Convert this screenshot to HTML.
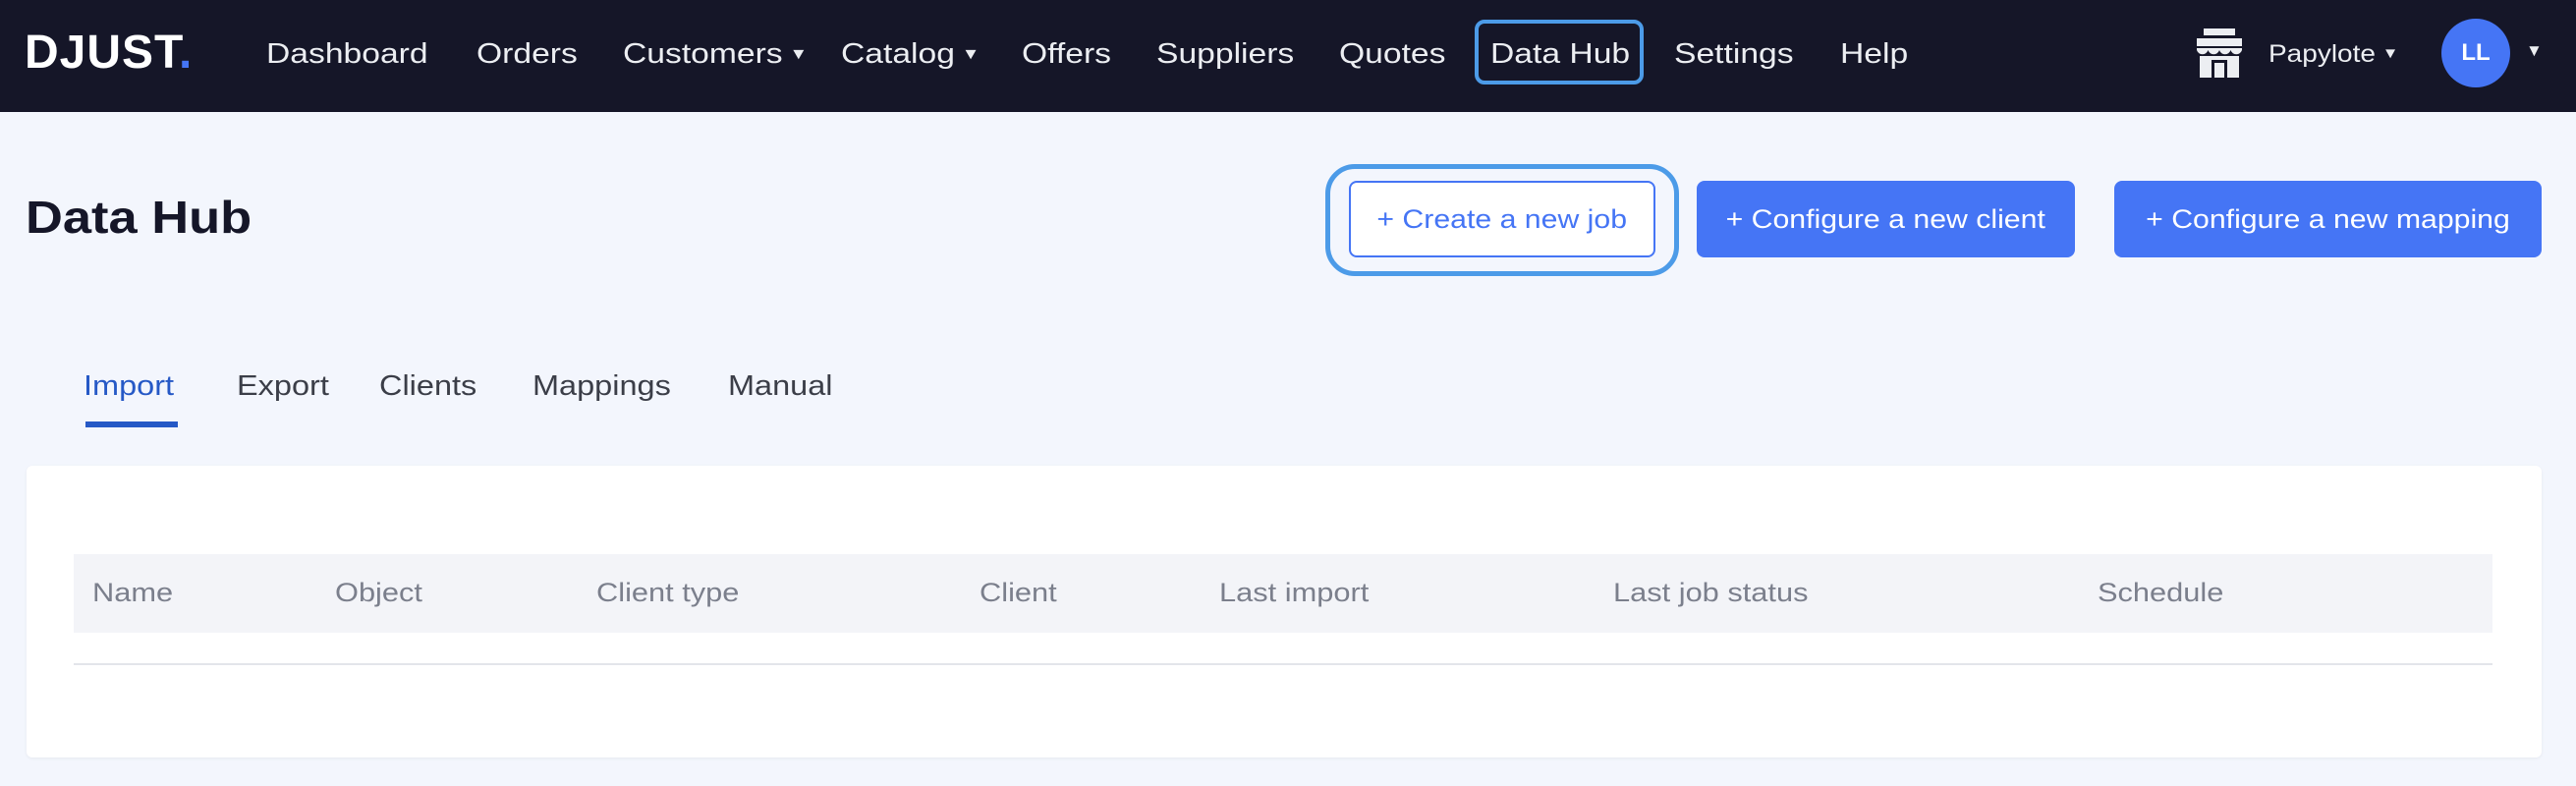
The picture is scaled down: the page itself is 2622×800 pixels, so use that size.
<!DOCTYPE html>
<html><head><meta charset="utf-8"><style>
*{margin:0;padding:0;box-sizing:border-box}
body{width:2622px;height:800px;background:#f3f6fd;font-family:"Liberation Sans",sans-serif;position:relative;overflow:hidden}
.a{position:absolute;white-space:nowrap}
.nav{position:absolute;left:0;top:0;width:2622px;height:114px;background:#151628}
.ni{position:absolute;top:38px;color:#eceef2;font-size:29px;line-height:34px;transform:scaleX(1.16);transform-origin:left center;white-space:nowrap}
.car{font-size:16px;vertical-align:4px;margin-left:6px}
.btn{position:absolute;top:184px;height:78px;border-radius:8px;font-size:27px;display:flex;align-items:center;justify-content:center}
.btn span{display:inline-block;transform:scaleX(1.12);white-space:nowrap}
.th{position:absolute;top:588px;color:#7b7f8c;font-size:27px;line-height:30px;transform:scaleX(1.14);transform-origin:left center;white-space:nowrap}
.tab{position:absolute;top:376px;color:#3b3e48;font-size:29px;line-height:34px;transform:scaleX(1.12);transform-origin:left center;white-space:nowrap}
</style></head><body>
<div class="nav">
<div class="a" style="left:25px;top:26px;color:#fff;font-size:48px;font-weight:bold;line-height:56px;letter-spacing:1px">DJUST<span style="color:#4575f5">.</span></div>
<div class="ni" style="left:271px">Dashboard</div>
<div class="ni" style="left:485px">Orders</div>
<div class="ni" style="left:634px">Customers<span class="car">▼</span></div>
<div class="ni" style="left:856px">Catalog<span class="car">▼</span></div>
<div class="ni" style="left:1040px">Offers</div>
<div class="ni" style="left:1177px">Suppliers</div>
<div class="ni" style="left:1363px">Quotes</div>
<div class="a" style="left:1501px;top:20px;width:172px;height:66px;border:4px solid #4c9be8;border-radius:10px"></div>
<div class="ni" style="left:1517px">Data Hub</div>
<div class="ni" style="left:1704px">Settings</div>
<div class="ni" style="left:1873px">Help</div>
<svg class="a" style="left:2234px;top:27px" width="50" height="54" viewBox="0 0 50 54">
<rect x="9" y="2" width="32" height="7" fill="#eceef2"/>
<rect x="2" y="12" width="46" height="8" fill="#eceef2"/>
<path d="M2 22h46v2a6 6 0 0 1-11.5 0a6 6 0 0 1-11.5 0a6 6 0 0 1-11.5 0a6 6 0 0 1-11.5 0z" fill="#eceef2"/>
<path d="M5 30h40v22H5zM17 34v18h16V34z" fill="#eceef2" fill-rule="evenodd"/>
<rect x="20" y="37" width="10" height="15" fill="#eceef2"/>
</svg>
<div class="ni" style="left:2309px;top:38px;font-size:25px;transform:scaleX(1.12)">Papylote<span class="car" style="font-size:15px">▼</span></div>
<div class="a" style="left:2485px;top:19px;width:70px;height:70px;border-radius:50%;background:#4575f5;color:#fff;font-weight:bold;font-size:24px;text-align:center;line-height:70px">LL</div>
<div class="a" style="left:2571px;top:42px;color:#eceef2;font-size:17px">▼</div>
</div>
<div class="a" style="left:26px;top:194px;font-size:46px;font-weight:bold;color:#151628;line-height:54px;transform:scaleX(1.14);transform-origin:left center">Data Hub</div>
<div class="a" style="left:1349px;top:167px;width:360px;height:114px;border:5px solid #4c9be8;border-radius:30px"></div>
<div class="btn" style="left:1373px;width:312px;background:#fff;border:2px solid #4575f5;color:#4575f5"><span>+ Create a new job</span></div>
<div class="btn" style="left:1727px;width:385px;background:#4575f5;color:#fff"><span>+ Configure a new client</span></div>
<div class="btn" style="left:2152px;width:435px;background:#4575f5;color:#fff"><span>+ Configure a new mapping</span></div>
<div class="tab" style="left:85px;color:#2659c6">Import</div>
<div class="a" style="left:87px;top:429px;width:94px;height:6px;background:#2659c6"></div>
<div class="tab" style="left:241px">Export</div>
<div class="tab" style="left:386px">Clients</div>
<div class="tab" style="left:542px">Mappings</div>
<div class="tab" style="left:741px">Manual</div>
<div class="a" style="left:27px;top:474px;width:2560px;height:297px;background:#fff;border-radius:6px;box-shadow:0 1px 3px rgba(0,0,0,0.06)"></div>
<div class="a" style="left:75px;top:564px;width:2462px;height:80px;background:#f3f4f8"></div>
<div class="a" style="left:75px;top:675px;width:2462px;height:2px;background:#e3e5ea"></div>
<div class="th" style="left:94px">Name</div>
<div class="th" style="left:341px">Object</div>
<div class="th" style="left:607px">Client type</div>
<div class="th" style="left:997px">Client</div>
<div class="th" style="left:1241px">Last import</div>
<div class="th" style="left:1642px">Last job status</div>
<div class="th" style="left:2135px">Schedule</div>
</body></html>
